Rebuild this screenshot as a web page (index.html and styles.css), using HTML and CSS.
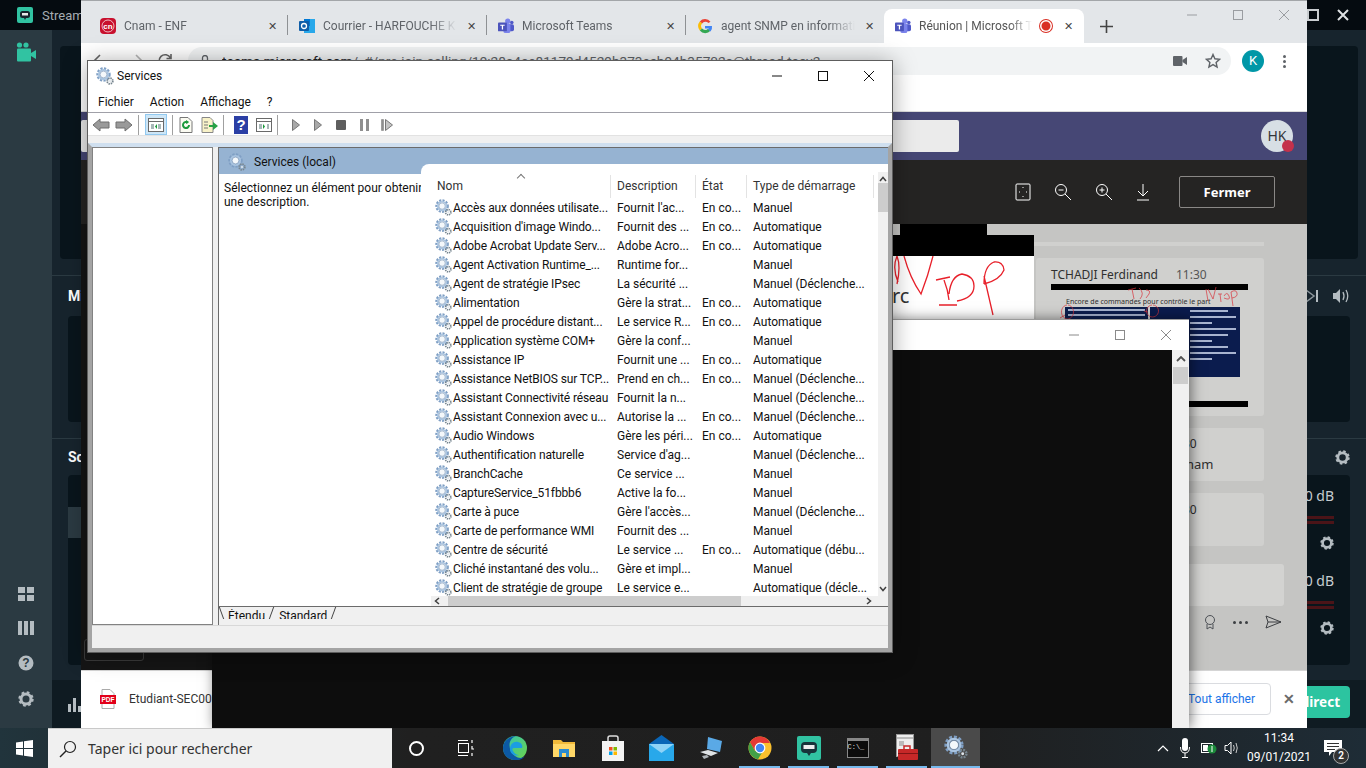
FILE: index.html
```html
<!DOCTYPE html>
<html lang="fr">
<head>
  <meta charset="UTF-8" />
  <title>Services</title>
  <link rel="stylesheet" href="styles.css">
</head>
<body>
<svg class="defs" width="0" height="0">
  <defs>
    <symbol id="gears" viewBox="0 0 18 18">
      <circle cx="7.5" cy="7.5" r="6" fill="none" stroke="#7f9fc4" stroke-width="2.4" stroke-dasharray="2.2 1.3"/>
      <circle cx="7.5" cy="7.5" r="4.6" fill="none" stroke="#a9c4e0" stroke-width="1.8"/>
      <circle cx="7.5" cy="7.5" r="3.4" fill="#f4f8fb" stroke="#6f8cae" stroke-width=".6"/>
      <circle cx="14" cy="14" r="2.8" fill="none" stroke="#76858f" stroke-width="1.8" stroke-dasharray="1.4 .8"/>
      <circle cx="14" cy="14" r="1.1" fill="#dfe6ec"/>
    </symbol>
    <symbol id="cog" viewBox="0 0 16 16">
      <circle cx="8" cy="8" r="5" fill="none" stroke="currentColor" stroke-width="3"/>
      <circle cx="8" cy="8" r="6.4" fill="none" stroke="currentColor" stroke-width="2.6" stroke-dasharray="2.6 2.42"/>
    </symbol>
    <symbol id="teams" viewBox="0 0 18 18">
      <circle cx="11" cy="3.5" r="3" fill="#7b83eb"/>
      <circle cx="15.5" cy="5" r="2" fill="#5059c9"/>
      <rect x="9" y="7" width="9" height="8" rx="2" fill="#5059c9"/>
      <rect x="6" y="6" width="8" height="11" rx="2.5" fill="#7b83eb"/>
      <rect x="0" y="5" width="10" height="10" rx="1" fill="#4b53bc"/>
      <path d="M2.5 7.5h5v1.2H5.7v4.3H4.300v-4.300H2.500z" fill="#fff"/>
    </symbol>
  </defs>
</svg>

<div class="desktop">
  <!-- fenetre du fond -->
  <section class="streamlabs">
    <div class="sl-title">
      <svg class="sl-logo" width="16" height="16" viewBox="0 0 16 16"><rect width="16" height="16" rx="2" fill="#31c3a2"/><rect x="3" y="4" width="10" height="7" rx="2.500" fill="#17242d"/><rect x="5" y="6" width="6" height="2.500" fill="#e8e8e8"/><path d="M7 11h2l-1 2z" fill="#17242d"/></svg>
      <span class="sl-name">Streamlabs OBS</span>
      <span class="sl-ctrl">
        <svg width="14" height="14" viewBox="0 0 14 14"><rect x="2" y="2" width="10" height="10" fill="none" stroke="#c9cdd0" stroke-width="2"/></svg>
        <svg width="14" height="14" viewBox="0 0 14 14"><path d="M2 2l10 10M12 2L2 12" stroke="#dfe2e4" stroke-width="2"/></svg>
      </span>
    </div>
    <div class="sl-body">
      <nav class="sl-side">
        <svg class="sl-cam" width="22" height="20" viewBox="0 0 22 20"><circle cx="4.500" cy="3" r="2.600" fill="#31c3a2"/><circle cx="11" cy="3" r="2.600" fill="#31c3a2"/><rect x="2" y="6.500" width="14" height="13" rx="1" fill="#31c3a2"/><path d="M16 11l5-3v9l-5-3z" fill="#31c3a2"/></svg>
        <div class="sl-side-low">
          <svg width="16" height="14" viewBox="0 0 16 14"><path d="M0 0h7v6H0zM9 0h7v6H9zM0 8h7v6H0zM9 8h7v6H9z" fill="#b4bcc1"/></svg>
          <svg width="16" height="14" viewBox="0 0 16 14"><path d="M0 0h4v14H0zM6 0h4v14H6zM12 0h4v14h-4z" fill="#b4bcc1"/></svg>
          <svg width="16" height="16" viewBox="0 0 16 16"><circle cx="8" cy="8" r="7.500" fill="#b4bcc1"/><text x="8" y="12" class="sl-q">?</text></svg>
          <svg class="sl-cog" width="16" height="16"><use href="#cog"/></svg>
        </div>
      </nav>
      <div class="sl-main">
        <div class="sl-sec sl-sec-a"><div class="sl-panel sl-panel-a"></div></div>
        <div class="sl-sec sl-sec-b">
          <div class="sl-head"><b>Mixeur</b>
            <span class="sl-media">
              <svg width="14" height="14" viewBox="0 0 14 14"><path d="M1 1l8 6-8 6z" fill="none" stroke="#8d979d" stroke-width="1.500"/><path d="M12 1v12" stroke="#b4bcc1" stroke-width="2"/></svg>
              <svg width="18" height="14" viewBox="0 0 18 14"><path d="M0 4h3l4-4v14l-4-4H0z" fill="#b4bcc1"/><path d="M10 3q2 4 0 8M13 1q3.500 6 0 12" fill="none" stroke="#b4bcc1" stroke-width="1.300"/></svg>
            </span>
          </div>
          <div class="sl-panel sl-panel-b"></div>
        </div>
        <div class="sl-sec sl-sec-c">
          <div class="sl-head sl-head-c"><b>Sources</b><svg class="sl-cog sl-cog-head" width="15" height="15"><use href="#cog"/></svg></div>
          <div class="sl-panel sl-panel-c">
            <div class="sl-audio">
              <span class="sl-db">0 dB</span><i class="sl-level"></i>
              <svg class="sl-cog" width="14" height="14"><use href="#cog"/></svg>
            </div>
            <div class="sl-audio">
              <span class="sl-db">0 dB</span><i class="sl-level"></i>
              <svg class="sl-cog" width="14" height="14"><use href="#cog"/></svg>
            </div>
          </div>
        </div>
        <div class="sl-foot">
          <svg class="sl-bars" width="14" height="16" viewBox="0 0 14 16"><path d="M0 8h3v8H0zM5 2h3v14H5zM10 10h3v6h-3z" fill="#b4bcc1"/></svg>
          <button class="sl-live">direct</button>
        </div>
      </div>
    </div>
  </section>

  <!-- chrome -->
  <section class="chrome">
    <div class="tabstrip">
      <div class="tab">
        <svg width="16" height="16" viewBox="0 0 16 16"><rect width="16" height="16" rx="4" fill="#c8102e"/><circle cx="8" cy="8" r="6" fill="none" stroke="#fff" stroke-width=".7"/><text x="8" y="11" class="fav-cn">cn</text></svg>
        <span class="tab-text">Cnam - ENF</span><span class="tab-x">✕</span>
      </div>
      <div class="tab">
        <svg width="16" height="16" viewBox="0 0 16 16"><rect x="5" y="1" width="11" height="14" fill="#28a8ea"/><rect x="5" y="1" width="6" height="7" fill="#0078d4"/><rect y="3" width="10" height="10" rx="1" fill="#0f5ea8"/><circle cx="5" cy="8" r="2.500" fill="none" stroke="#fff" stroke-width="1.300"/></svg>
        <span class="tab-text">Courrier - HARFOUCHE K</span><span class="tab-x">✕</span>
      </div>
      <div class="tab">
        <svg width="16" height="16"><use href="#teams"/></svg>
        <span class="tab-text">Microsoft Teams</span><span class="tab-x">✕</span>
      </div>
      <div class="tab">
        <svg width="16" height="16" viewBox="0 0 16 16"><path d="M13.500 3.700A7 7 0 0 0 2.800 3.400l2.300 2A4 4 0 0 1 11.400 5z" fill="#ea4335"/><path d="M2.800 3.400a7 7 0 0 0 0 9.200l2.300-2a4 4 0 0 1 0-5.200z" fill="#fbbc05"/><path d="M2.800 12.600a7 7 0 0 0 10.700.100l-2.400-1.900a4 4 0 0 1-6-.200z" fill="#34a853"/><path d="M15 8H8v2.600h3.900a4 4 0 0 1-.8 1l2.400 1.900A7 7 0 0 0 15 8z" fill="#4285f4"/></svg>
        <span class="tab-text">agent SNMP en informati</span><span class="tab-x">✕</span>
      </div>
      <div class="tab tab-on">
        <svg width="16" height="16"><use href="#teams"/></svg>
        <span class="tab-text tab-text-on">Réunion | Microsoft T</span>
        <span class="tab-rec"></span><span class="tab-x">✕</span>
      </div>
      <span class="tab-plus"><svg width="13" height="13" viewBox="0 0 13 13"><path d="M6.500 0v13M0 6.500h13" stroke="#444" stroke-width="1.600"/></svg></span>
      <span class="chrome-ctrl">
        <svg width="14" height="14" viewBox="0 0 14 14"><path d="M2 7h10" stroke="#9a9da1"/></svg>
        <svg width="14" height="14" viewBox="0 0 14 14"><rect x="2.500" y="2.500" width="9" height="9" fill="none" stroke="#9a9da1"/></svg>
        <svg width="14" height="14" viewBox="0 0 14 14"><path d="M2 2l10 10M12 2L2 12" stroke="#9a9da1"/></svg>
      </span>
    </div>
    <div class="toolbar">
      <span class="nav-btns">
        <svg width="16" height="16" viewBox="0 0 16 16"><path d="M15 8H2M8 2L2 8l6 6" fill="none" stroke="#666" stroke-width="1.600"/></svg>
        <svg width="16" height="16" viewBox="0 0 16 16"><path d="M1 8h13M8 2l6 6-6 6" fill="none" stroke="#b5b5b5" stroke-width="1.600"/></svg>
        <svg width="16" height="16" viewBox="0 0 16 16"><path d="M13.500 5A6 6 0 1 0 14 9M14 1v4.500H9.500" fill="none" stroke="#666" stroke-width="1.600"/></svg>
      </span>
      <div class="omnibox">
        <svg class="omni-lock" width="10" height="12" viewBox="0 0 10 12"><rect y="5" width="10" height="7" rx="1" fill="#5f6368"/><path d="M2.500 5V3a2.500 2.500 0 0 1 5 0v2" fill="none" stroke="#5f6368" stroke-width="1.300"/></svg>
        <span class="url"><b>teams.microsoft.com</b>/_#/pre-join-calling/19:28a4ae81179d4529b373ecb94b35702c@thread.tacv2</span>
        <svg class="omni-cam" width="14" height="12" viewBox="0 0 14 12"><rect y="1" width="9.500" height="10" rx="1" fill="#5f6368"/><path d="M9.500 5l4.500-3v8L9.500 7z" fill="#5f6368"/></svg>
        <svg width="16" height="16" viewBox="0 0 16 16"><path d="M8 1.500l1.900 4.300 4.600.500-3.400 3.100 1 4.600L8 11.600l-4.100 2.400 1-4.600L1.500 6.300l4.600-.5z" fill="none" stroke="#5f6368" stroke-width="1.400"/></svg>
      </div>
      <span class="avatar-k">K</span>
      <span class="kebab"><i></i><i></i><i></i></span>
    </div>
    <div class="teams-head">
      <div class="teams-search"></div>
      <div class="hk">HK<i></i></div>
    </div>
    <div class="viewer-bar">
      <svg width="16" height="18" viewBox="0 0 16 18"><rect x="1" y="1" width="14" height="16" rx="1" fill="none" stroke="#fff"/><path d="M8 4v1M8 13v1M4 9h1M11 9h1" stroke="#fff"/></svg>
      <svg width="18" height="18" viewBox="0 0 18 18"><circle cx="7" cy="7" r="5.500" fill="none" stroke="#fff"/><path d="M4.500 7h5M11 11l6 6" stroke="#fff"/></svg>
      <svg width="18" height="18" viewBox="0 0 18 18"><circle cx="7" cy="7" r="5.500" fill="none" stroke="#fff"/><path d="M4.500 7h5M7 4.500v5M11 11l6 6" stroke="#fff"/></svg>
      <svg width="14" height="18" viewBox="0 0 14 18"><path d="M7 1v12M2 8l5 5 5-5M1 17h12" fill="none" stroke="#fff"/></svg>
      <button class="close-btn">Fermer</button>
    </div>
    <div class="viewer">
      <div class="viewer-left"><div class="viewer-box"></div></div>
      <div class="viewer-main">
        <div class="slide-col">
          <div class="bar-top"></div>
          <div class="bar-wide"></div>
          <div class="slide-pic">
            <span class="slide-rc">rc</span>
            <svg class="slide-ink" width="142" height="64" viewBox="0 0 142 64"><path d="M6 26Q0 12 5 0q4 10 0 28M12 0q6 22 17 38Q36 20 41 0M44 24l14-3M52 24q4 10 5 20M47 49l18 0M57 38q2-18 13-20 12 2 12 12 0 12-17 15M92 20l9 39M92 28q0-18 10-22 9-1 10 8-4 10-20 14" fill="none" stroke="#e8202a" stroke-width="1.300"/></svg>
          </div>
        </div>
        <div class="chat">
          <div class="chat-strip"></div>
          <div class="msg msg-big">
            <div class="msg-who"><b>TCHADJI Ferdinand</b><span>11:30</span></div>
            <div class="msg-redact"></div>
            <p class="slide-title">Encore de commandes pour contrôle le part</p>
            <div class="navy">
              <div class="navy-l"><i></i><i></i></div>
              <div class="navy-r"><i></i><i></i><i></i><i></i><i></i><i></i><i></i><i></i><i></i></div>
            </div>
            <svg class="msg-ink" width="228" height="70" viewBox="0 0 228 70"><path d="M92 32l8-2M96 31l2 10M103 30q6 5 1 11M110 32q5 0 3 4l-3 4M170 31l2 12M172 31l5 10 3-12M182 36h4M184 36l1 8M188 38q3-5 5 0t-5 2M195 34l2 14M195 34q5-3 6 1t-5 5M31 47a6 7 0 1 0 1 0M116 47a6 6 0 1 0 1 0M24 60l5-3M108 53l4 1" fill="none" stroke="#d8333c" stroke-width=".7"/></svg>
            <div class="msg-redact msg-redact-low"></div>
          </div>
          <div class="msg msg-small"><span>11:30</span><span class="msg-line">de Cnam</span></div>
          <div class="msg msg-small2"><span>11:30</span></div>
          <div class="chat-input"></div>
          <div class="chat-tools">
            <svg width="12" height="15" viewBox="0 0 12 15"><circle cx="6" cy="5" r="4.500" fill="none" stroke="#4d5156"/><path d="M3 9v5l3-2 3 2V9" fill="none" stroke="#4d5156"/></svg>
            <span class="dots"><i></i><i></i><i></i></span>
            <svg width="17" height="14" viewBox="0 0 17 14"><path d="M1 1l15 6-15 6 2-6zM3 7h13" fill="none" stroke="#3c3f42"/></svg>
          </div>
        </div>
      </div>
    </div>
    <div class="shelf">
      <svg width="16" height="20" viewBox="0 0 16 20"><path d="M2 .500h8l4 4V19.500H2z" fill="#fff" stroke="#aaa"/><rect y="6" width="16" height="9" fill="#e2001a"/><text x="8" y="13" class="pdf-txt">PDF</text></svg>
      <span class="shelf-file">Etudiant-SEC001.pdf</span>
      <button class="shelf-all">Tout afficher</button>
      <span class="shelf-x">✕</span>
    </div>
  </section>

  <!-- fenetre noire -->
  <section class="blackwin">
    <div class="bw-title">
      <svg width="14" height="14" viewBox="0 0 14 14"><path d="M2 7h10" stroke="#8a8a8a"/></svg>
      <svg width="14" height="14" viewBox="0 0 14 14"><rect x="2.500" y="2.500" width="9" height="9" fill="none" stroke="#8a8a8a"/></svg>
      <svg width="14" height="14" viewBox="0 0 14 14"><path d="M2 2l10 10M12 2L2 12" stroke="#8a8a8a"/></svg>
    </div>
    <div class="bw-body">
      <div class="bw-content"></div>
      <div class="bw-scroll"><svg width="10" height="6" viewBox="0 0 10 6"><path d="M1 5l4-4 4 4" fill="none" stroke="#505050" stroke-width="1.800"/></svg><i></i></div>
    </div>
  </section>

  <!-- services.msc -->
  <section class="services">
    <div class="svc-title">
      <svg width="18" height="18"><use href="#gears"/></svg>
      <span class="svc-name">Services</span>
      <span class="svc-ctrl">
        <svg width="12" height="12" viewBox="0 0 12 12"><path d="M1 6h10" stroke="#111"/></svg>
        <svg width="12" height="12" viewBox="0 0 12 12"><rect x="1.500" y="1.500" width="9" height="9" fill="none" stroke="#111"/></svg>
        <svg width="12" height="12" viewBox="0 0 12 12"><path d="M1 1l10 10M11 1L1 11" stroke="#111"/></svg>
      </span>
    </div>
    <div class="svc-menu"><span>Fichier</span><span>Action</span><span>Affichage</span><span>?</span></div>
    <div class="svc-tools">
      <svg width="18" height="16" viewBox="0 0 18 16"><path d="M1 8l7-6v3h9v6H8v3z" fill="#9a9a9a" stroke="#6f6f6f"/></svg>
      <svg class="t-fwd" width="18" height="16" viewBox="0 0 18 16"><path d="M17 8l-7-6v3H1v6h9v3z" fill="#9a9a9a" stroke="#6f6f6f"/></svg>
      <i class="t-sep"></i>
      <span class="t-on"><svg width="16" height="14" viewBox="0 0 16 14"><rect x=".500" y=".500" width="15" height="13" fill="#fff" stroke="#6a6a6a"/><path d="M.500 3.500h15" stroke="#6a6a6a"/><path d="M3 6h3v5H3zM10 6h3v5h-3z" fill="#a8b8b8"/><path d="M9 6v5L7 8.500z" fill="#1c9a3c"/></svg></span>
      <i class="t-sep"></i>
      <svg class="t-ic" width="14" height="16" viewBox="0 0 14 16"><path d="M1 .500h8l4 4v11H1z" fill="#fbfbf2" stroke="#777"/><path d="M10 8a3 3 0 1 1-1-2.200" fill="none" stroke="#1c9a3c" stroke-width="2"/><path d="M7 3l3 2-3 2z" fill="#1c9a3c"/></svg>
      <svg class="t-ic" width="17" height="16" viewBox="0 0 17 16"><path d="M1 .500h8l3 3v12H1z" fill="#f8f2c8" stroke="#888"/><path d="M3 5h4M3 8h4M3 11h4" stroke="#777"/><path d="M8 8h4V5l5 4-5 4v-3H8z" fill="#27a245"/></svg>
      <i class="t-sep"></i>
      <svg class="t-ic t-help" width="14" height="18" viewBox="0 0 14 18"><rect width="14" height="18" fill="#2b3fa5"/><text x="7" y="14" class="t-q">?</text></svg>
      <svg class="t-ic" width="16" height="14" viewBox="0 0 16 14"><rect x=".500" y=".500" width="15" height="13" fill="#fff" stroke="#6a6a6a"/><path d="M.500 3.500h15" stroke="#6a6a6a"/><path d="M3 6h3v5H3zM11 6h2v5h-2z" fill="#a8b8b8"/><path d="M7 6v5l2-2.500z" fill="#1c9a3c"/></svg>
      <i class="t-sep"></i>
      <svg class="t-play" width="8" height="12" viewBox="0 0 8 12"><path d="M.500 .500l7 5.500-7 5.500z" fill="#a8a8a8" stroke="#777"/></svg>
      <svg class="t-play" width="8" height="12" viewBox="0 0 8 12"><path d="M.500 .500l7 5.500-7 5.500z" fill="#a8a8a8" stroke="#777"/></svg>
      <svg class="t-play" width="10" height="12" viewBox="0 0 10 12"><rect y="1" width="10" height="10" rx="1" fill="#5e5e5e"/></svg>
      <svg class="t-play" width="9" height="12" viewBox="0 0 9 12"><path d="M0 0h3v12H0zM6 0h3v12H6z" fill="#8f8f8f"/></svg>
      <svg class="t-play" width="12" height="12" viewBox="0 0 12 12"><path d="M.500 .500h2v11h-2z" fill="#8f8f8f" stroke="#777" stroke-width=".5"/><path d="M4.500 .500l7 5.500-7 5.500z" fill="#c4c4c4" stroke="#777"/></svg>
    </div>
    <div class="svc-gap"></div>
    <div class="svc-client">
      <div class="svc-panes">
        <div class="svc-tree"></div>
        <div class="svc-right">
          <div class="svc-band">
            <svg width="18" height="18"><use href="#gears"/></svg><span>Services (local)</span>
          </div>
          <div class="svc-split">
            <p class="svc-desc">Sélectionnez un élément pour obtenir<br>une description.</p>
            <div class="svc-list">
              <div class="list-scroll">
                <div class="list-main">
                  <div class="row row-head">
                    <span class="caret"></span>
                    <span class="cell">Nom</span><span class="cell">Description</span><span class="cell">État</span><span class="cell">Type de démarrage</span>
                  </div>
                  <div class="row"><span class="cell c-name"><svg width="17" height="17"><use href="#gears"/></svg>Accès aux données utilisate...</span><span class="cell">Fournit l'ac...</span><span class="cell">En co...</span><span class="cell">Manuel</span></div>
                  <div class="row"><span class="cell c-name"><svg width="17" height="17"><use href="#gears"/></svg>Acquisition d'image Windo...</span><span class="cell">Fournit des ...</span><span class="cell">En co...</span><span class="cell">Automatique</span></div>
                  <div class="row"><span class="cell c-name"><svg width="17" height="17"><use href="#gears"/></svg>Adobe Acrobat Update Serv...</span><span class="cell">Adobe Acro...</span><span class="cell">En co...</span><span class="cell">Automatique</span></div>
                  <div class="row"><span class="cell c-name"><svg width="17" height="17"><use href="#gears"/></svg>Agent Activation Runtime_...</span><span class="cell">Runtime for...</span><span class="cell"></span><span class="cell">Manuel</span></div>
                  <div class="row"><span class="cell c-name"><svg width="17" height="17"><use href="#gears"/></svg>Agent de stratégie IPsec</span><span class="cell">La sécurité ...</span><span class="cell"></span><span class="cell">Manuel (Déclenche...</span></div>
                  <div class="row"><span class="cell c-name"><svg width="17" height="17"><use href="#gears"/></svg>Alimentation</span><span class="cell">Gère la strat...</span><span class="cell">En co...</span><span class="cell">Automatique</span></div>
                  <div class="row"><span class="cell c-name"><svg width="17" height="17"><use href="#gears"/></svg>Appel de procédure distant...</span><span class="cell">Le service R...</span><span class="cell">En co...</span><span class="cell">Automatique</span></div>
                  <div class="row"><span class="cell c-name"><svg width="17" height="17"><use href="#gears"/></svg>Application système COM+</span><span class="cell">Gère la conf...</span><span class="cell"></span><span class="cell">Manuel</span></div>
                  <div class="row"><span class="cell c-name"><svg width="17" height="17"><use href="#gears"/></svg>Assistance IP</span><span class="cell">Fournit une ...</span><span class="cell">En co...</span><span class="cell">Automatique</span></div>
                  <div class="row"><span class="cell c-name"><svg width="17" height="17"><use href="#gears"/></svg>Assistance NetBIOS sur TCP...</span><span class="cell">Prend en ch...</span><span class="cell">En co...</span><span class="cell">Manuel (Déclenche...</span></div>
                  <div class="row"><span class="cell c-name"><svg width="17" height="17"><use href="#gears"/></svg>Assistant Connectivité réseau</span><span class="cell">Fournit la n...</span><span class="cell"></span><span class="cell">Manuel (Déclenche...</span></div>
                  <div class="row"><span class="cell c-name"><svg width="17" height="17"><use href="#gears"/></svg>Assistant Connexion avec u...</span><span class="cell">Autorise la ...</span><span class="cell">En co...</span><span class="cell">Manuel (Déclenche...</span></div>
                  <div class="row"><span class="cell c-name"><svg width="17" height="17"><use href="#gears"/></svg>Audio Windows</span><span class="cell">Gère les péri...</span><span class="cell">En co...</span><span class="cell">Automatique</span></div>
                  <div class="row"><span class="cell c-name"><svg width="17" height="17"><use href="#gears"/></svg>Authentification naturelle</span><span class="cell">Service d'ag...</span><span class="cell"></span><span class="cell">Manuel (Déclenche...</span></div>
                  <div class="row"><span class="cell c-name"><svg width="17" height="17"><use href="#gears"/></svg>BranchCache</span><span class="cell">Ce service ...</span><span class="cell"></span><span class="cell">Manuel</span></div>
                  <div class="row"><span class="cell c-name"><svg width="17" height="17"><use href="#gears"/></svg>CaptureService_51fbbb6</span><span class="cell">Active la fo...</span><span class="cell"></span><span class="cell">Manuel</span></div>
                  <div class="row"><span class="cell c-name"><svg width="17" height="17"><use href="#gears"/></svg>Carte à puce</span><span class="cell">Gère l'accès...</span><span class="cell"></span><span class="cell">Manuel (Déclenche...</span></div>
                  <div class="row"><span class="cell c-name"><svg width="17" height="17"><use href="#gears"/></svg>Carte de performance WMI</span><span class="cell">Fournit des ...</span><span class="cell"></span><span class="cell">Manuel</span></div>
                  <div class="row"><span class="cell c-name"><svg width="17" height="17"><use href="#gears"/></svg>Centre de sécurité</span><span class="cell">Le service ...</span><span class="cell">En co...</span><span class="cell">Automatique (débu...</span></div>
                  <div class="row"><span class="cell c-name"><svg width="17" height="17"><use href="#gears"/></svg>Cliché instantané des volu...</span><span class="cell">Gère et impl...</span><span class="cell"></span><span class="cell">Manuel</span></div>
                  <div class="row"><span class="cell c-name"><svg width="17" height="17"><use href="#gears"/></svg>Client de stratégie de groupe</span><span class="cell">Le service e...</span><span class="cell"></span><span class="cell">Automatique (décle...</span></div>
                </div>
                <div class="vscroll">
                  <svg width="8" height="6" viewBox="0 0 8 6"><path d="M1 5l3-3.500L7 5" fill="none" stroke="#404040" stroke-width="1.500"/></svg>
                  <i></i>
                  <svg width="8" height="6" viewBox="0 0 8 6"><path d="M1 1l3 3.500L7 1" fill="none" stroke="#404040" stroke-width="1.500"/></svg>
                </div>
              </div>
              <div class="hscroll">
                <svg width="6" height="8" viewBox="0 0 6 8"><path d="M5 1L1.500 4 5 7" fill="none" stroke="#404040" stroke-width="1.500"/></svg>
                <i></i>
                <svg width="6" height="8" viewBox="0 0 6 8"><path d="M1 1l3.500 3L1 7" fill="none" stroke="#404040" stroke-width="1.500"/></svg>
              </div>
            </div>
          </div>
          <div class="svc-tabs"><span class="vtab"><em>Étendu</em></span><span class="vtab"><em>Standard</em></span></div>
        </div>
      </div>
      <div class="svc-status"></div>
    </div>
  </section>

  <footer class="taskbar">
    <span class="start"><svg width="17" height="17" viewBox="0 0 17 17"><path d="M0 2.400l7-1v6.700H0zM8 1.200l9-1.200v8.100H8zM0 9h7v6.600l-7-1zM8 9h9v8l-9-1.200z" fill="#fff"/></svg></span>
    <div class="searchbox">
      <svg width="18" height="18" viewBox="0 0 18 18"><circle cx="11" cy="7" r="5.500" fill="none" stroke="#222" stroke-width="1.200"/><path d="M7 11l-6 6" stroke="#222" stroke-width="1.400"/></svg>
      <span>Taper ici pour rechercher</span>
    </div>
    <div class="task-icons">
      <span class="ti"><i class="cortana"></i></span>
      <span class="ti"><svg width="18" height="18" viewBox="0 0 18 18"><rect x="1.500" y="4.500" width="10" height="9" fill="none" stroke="#fff"/><path d="M1 1.500h10M1 16.500h10M15 1v3M15 7v3h2M15 14v3" stroke="#fff" stroke-width="1.200" fill="none"/></svg></span>
      <span class="ti"><svg width="26" height="26" viewBox="0 0 26 26"><defs><linearGradient id="edgeA" x1="0" y1="0" x2="1" y2="1"><stop offset="0" stop-color="#35c1b0"/><stop offset="1" stop-color="#6bd64c"/></linearGradient></defs><circle cx="13" cy="13" r="12" fill="url(#edgeA)"/><path d="M1 13C1 5 9 1 14 1 5 4 6 16 13 21c4 3 8 2 10 0-3 4-6 4-10 4C6 25 1 20 1 13z" fill="#0c59a4"/><path d="M8 14c0-5 4-8 8-7 4 1 5 4 4 6h-8c-2 0-2 2-1 3 1 2 3 4 6 4-5 2-9-2-9-6z" fill="#1b9de2"/></svg></span>
      <span class="ti"><svg width="22" height="20" viewBox="0 0 22 20"><path d="M0 2h8l2 2h12v15H0z" fill="#f0b93a"/><rect y="6" width="22" height="13" fill="#ffd767"/><rect x="6" y="11" width="10" height="8" fill="#2a8bd0"/><rect x="9" y="15" width="4" height="4" fill="#ffd767"/></svg></span>
      <span class="ti"><svg width="22" height="26" viewBox="0 0 22 26"><path d="M6 8V3q0-2 2-2h6q2 0 2 2v5" fill="none" stroke="#ddd" stroke-width="1.500"/><rect y="6" width="22" height="20" fill="#f4f4f4"/><path d="M7 12h3.500v3.500H7z" fill="#f25022"/><path d="M11.500 12H15v3.500h-3.500z" fill="#7fba00"/><path d="M7 16.500h3.500V20H7z" fill="#00a4ef"/><path d="M11.500 16.500H15V20h-3.500z" fill="#ffb900"/></svg></span>
      <span class="ti"><svg width="25" height="26" viewBox="0 0 25 26"><path d="M12.500 0L25 9v17H0V9z" fill="#0a66b7"/><rect y="9" width="25" height="17" fill="#28a8ea"/><path d="M0 9l12.500 9L25 9" fill="#8fd3f7"/></svg></span>
      <span class="ti"><svg width="24" height="22" viewBox="0 0 24 22"><path d="M9 0l14 4-2 11-13-3z" fill="#5aa9e6"/><path d="M1 15l8-2 10 3-7 3z" fill="#dfe3e6"/><path d="M3 19l5-1 2 2-5 2z" fill="#aeb4b9"/></svg></span>
      <span class="ti ti-run"><svg width="24" height="24" viewBox="0 0 24 24"><circle cx="12" cy="12" r="11.500" fill="#fbc02d"/><path d="M12 .500A11.500 11.500 0 0 0 2 6.300L7 15 12 7h10A11.500 11.500 0 0 0 12 .500z" fill="#e53935"/><path d="M2 6.300A11.500 11.500 0 0 0 10 23.300L15 15H7z" fill="#43a047"/><circle cx="12" cy="12" r="5.400" fill="#fff"/><circle cx="12" cy="12" r="4.200" fill="#4285f4"/></svg></span>
      <span class="ti ti-run"><svg width="24" height="24" viewBox="0 0 24 24"><rect width="24" height="24" rx="2" fill="#31c3a2"/><rect x="4" y="6" width="16" height="11" rx="4" fill="#17343a"/><rect x="6.500" y="9" width="11" height="4" fill="#eee"/><path d="M10 17h4l-2 3z" fill="#17343a"/></svg></span>
      <span class="ti ti-run"><span class="cmd">C:\_</span></span>
      <span class="ti ti-run"><svg width="22" height="28" viewBox="0 0 22 28"><rect x=".500" y=".500" width="17" height="22" fill="#eee" stroke="#999"/><path d="M1 4h16" stroke="#888"/><rect x="3" y="7" width="5" height="5" fill="#bbb"/><rect x="2" y="15" width="20" height="11" rx="1" fill="#c62828"/><path d="M8 15v-3h6v3" fill="none" stroke="#c62828" stroke-width="1.500"/><rect x="2" y="19" width="20" height="1" fill="#7f1515"/></svg></span>
      <span class="ti ti-on"><svg width="24" height="24"><use href="#gears"/></svg></span>
    </div>
    <div class="tray">
      <svg width="12" height="8" viewBox="0 0 12 8"><path d="M1 7l5-5 5 5" fill="none" stroke="#fff" stroke-width="1.200"/></svg>
      <svg width="10" height="20" viewBox="0 0 10 20"><rect x="2" y="0" width="6" height="13" rx="3" fill="#fff"/><path d="M.500 9q0 6 4.500 6t4.500-6M5 15v4M2 19.500h6" fill="none" stroke="#fff"/></svg>
      <svg width="16" height="14" viewBox="0 0 16 14"><rect x=".500" y="2.500" width="11" height="9" fill="none" stroke="#fff"/><rect x="2" y="4" width="5" height="6" fill="#fff"/><circle cx="11" cy="8" r="4.500" fill="#1b8a3a"/><path d="M11 5v6" stroke="#fff"/></svg>
      <svg class="tray-vol" width="16" height="16" viewBox="0 0 16 16"><path d="M1 5.500h2.500L7 2v12l-3.500-3.500H1z" fill="none" stroke="#fff"/><path d="M9.500 5q1.500 3 0 6M12 3q2.500 5 0 10" fill="none" stroke="#ccc"/></svg>
    </div>
    <div class="clock"><span>11:34</span><span>09/01/2021</span></div>
    <div class="notif">
      <svg width="18" height="16" viewBox="0 0 18 16"><path d="M0 0h18v12H8l-3 4v-4H0z" fill="#fff"/><path d="M3 3.500h12M3 6.500h12M3 9.500h8" stroke="#333"/></svg>
      <b>2</b>
    </div>
  </footer>
</div>
</body>
</html>
```

FILE: styles.css
```css
* {
  box-sizing: border-box;
  margin: 0;
  padding: 0;
}
body {
  font-family: Roboto, "Noto Sans", sans-serif;
  background: #000;
  overflow: hidden;
}
svg {
  flex: none;
  display: block;
}
i {
  display: block;
}
.defs {
  position: absolute;
}
.desktop {
  width: 1366px;
  height: 768px;
  display: flex;
  flex-direction: column;
  position: relative;
  overflow: hidden;
}

/* streamlabs */
.streamlabs {
  position: absolute;
  left: 0;
  top: 0;
  width: 1366px;
  height: 728px;
  background: #17242d;
  display: flex;
  flex-direction: column;
  color: #fff;
}
.sl-title {
  height: 30px;
  background: #050b10;
  display: flex;
  align-items: center;
  padding-left: 17px;
  gap: 9px;
  font-size: 13px;
  color: #a5adb2;
}
.sl-ctrl {
  margin-left: auto;
  display: flex;
  gap: 16px;
  padding-right: 16px;
}
.sl-body {
  flex: 1;
  display: flex;
  min-height: 0;
}
.sl-side {
  width: 52px;
  background: #2b3a42;
  display: flex;
  flex-direction: column;
  align-items: center;
  padding-top: 12px;
}
.sl-cam {
  margin-bottom: auto;
}
.sl-side-low {
  display: flex;
  flex-direction: column;
  align-items: center;
  gap: 20px;
  padding-bottom: 21px;
}
.sl-q {
  font: bold 12px "Liberation Sans", sans-serif;
  text-anchor: middle;
  fill: #2b3a42;
}
.sl-cog {
  color: #b4bcc1;
}
.sl-main {
  flex: 1;
  display: flex;
  flex-direction: column;
}
.sl-sec {
  border-bottom: 1px solid #2b3a42;
  padding: 0 16px 0 16px;
}
.sl-sec-a {
  height: 246px;
  padding: 16px 8px 0;
}
.sl-panel {
  background: #09151c;
  border-radius: 4px;
}
.sl-panel-a {
  height: 213px;
}
.sl-sec-b {
  height: 163px;
}
.sl-head {
  height: 40px;
  display: flex;
  align-items: center;
  font-size: 14px;
}
.sl-head-c {
  height: 36px;
}
.sl-media {
  margin-left: auto;
  display: flex;
  gap: 14px;
  align-items: center;
  margin-right: -1px;
}
.sl-panel-b {
  height: 106px;
}
.sl-sec-c {
  flex: 1;
  border-bottom: none;
}
.sl-cog-head {
  margin-left: auto;
  margin-right: 0;
}
.sl-panel-c {
  height: 190px;
  padding-top: 11px;
  background-image: linear-gradient(transparent 32px, #2b3a42 32px, #2b3a42 63px, transparent 63px);
  background-size: 50% 100%;
  background-repeat: no-repeat;
}
.sl-audio {
  height: 85px;
  display: flex;
  flex-direction: column;
  align-items: flex-end;
  padding: 0 16px 0 0;
}
.sl-db {
  font-family: "Noto Sans", sans-serif;
  font-size: 14px;
  line-height: 20px;
  color: #c5ccd0;
}
.sl-level {
  width: 300px;
  height: 8px;
  margin-top: 10px;
  border-top: 3px solid #4b1418;
  border-bottom: 3px solid #4b1418;
}
.sl-audio .sl-cog {
  margin: 12px 0 0;
}
.sl-foot {
  height: 48px;
  background: #0f1b22;
  display: flex;
  align-items: center;
  padding: 0 16px;
}
.sl-live {
  margin-left: auto;
  width: 160px;
  height: 32px;
  border: none;
  border-radius: 4px;
  background: #2cc4a0;
  color: #fff;
  font: bold 13.500px "Noto Sans", sans-serif;
  text-align: right;
  padding-right: 10px;
  margin-top: -4px;
}

/* chrome */
.chrome {
  position: absolute;
  left: 81px;
  top: 0;
  width: 1226px;
  height: 728px;
  display: flex;
  flex-direction: column;
  background: #fff;
  border-top: 1px solid #a3a6a9;
}
.tabstrip {
  height: 42px;
  background: #e3e6e9;
  display: flex;
  align-items: flex-end;
  padding-left: 11px;
  font-size: 12px;
  color: #555;
}
.tab {
  width: 199px;
  height: 34px;
  display: flex;
  align-items: center;
  padding: 0 13px 0 8px;
  gap: 8px;
  position: relative;
}
.tab::after {
  content: "";
  position: absolute;
  right: 3px;
  top: 6px;
  height: 20px;
  border-right: 1px solid #8e9194;
}
.tab:nth-child(4)::after {
  display: none;
}
.tab-text {
  flex: 1;
  white-space: nowrap;
  overflow: hidden;
  color: #5f6368;
  -webkit-mask-image: linear-gradient(to right, #000 80%, transparent);
  mask-image: linear-gradient(to right, #000 80%, transparent);
}
.tab-x {
  color: #444;
  font-size: 11px;
  width: 12px;
  text-align: center;
}
.tab-on {
  width: 200px;
  background: #fff;
  border-radius: 8px 8px 0 0;
  margin-left: -4px;
  padding-left: 11px;
  padding-right: 10px;
}
.tab-on::after {
  display: none;
}
.tab-text-on {
  color: #555;
}
.tab-rec {
  width: 12px;
  height: 12px;
  border-radius: 50%;
  background: #d93025;
  box-shadow: inset 0 0 0 1.5px #fff, 0 0 0 1px #d93025;
  flex: none;
  margin-right: 2px;
}
.tab-plus {
  width: 44px;
  height: 34px;
  display: flex;
  align-items: center;
  justify-content: center;
}
.chrome-ctrl {
  align-self: flex-start;
  margin-left: auto;
  display: flex;
  gap: 32px;
  padding: 7px 16px 0 0;
}
.toolbar {
  height: 69px;
  background: #fff;
  display: flex;
  align-items: flex-start;
  padding-top: 4px;
  border-bottom: 1px solid #dcdcdc;
}
.nav-btns {
  width: 107px;
  display: flex;
  padding: 6px 0 0 11px;
  gap: 20px;
}
.nav-btns svg:last-child {
  margin-left: -7px;
}
.omnibox {
  width: 1043px;
  height: 28px;
  background: #f1f3f4;
  border-radius: 14px;
  display: flex;
  align-items: center;
  gap: 18px;
  padding-right: 10px;
  font-size: 13.600px;
  color: #5f6368;
}
.omni-lock {
  margin-left: 12px;
  margin-right: -6px;
}
.url {
  flex: 1;
  white-space: nowrap;
  overflow: hidden;
}
.url b {
  font-weight: 400;
  color: #202124;
}
.avatar-k {
  width: 22px;
  height: 22px;
  margin: 3px 0 0 11px;
  border-radius: 50%;
  background: #0097a7;
  color: #fff;
  font-size: 13px;
  line-height: 22px;
  text-align: center;
}
.kebab {
  margin: 8px 0 0 19px;
  display: flex;
  flex-direction: column;
  gap: 2px;
}
.kebab i {
  width: 3px;
  height: 3px;
  border-radius: 50%;
  background: #5f6368;
}
.teams-head {
  height: 48px;
  background: #464775;
  display: flex;
  align-items: center;
  justify-content: space-between;
  padding-right: 14px;
}
.teams-search {
  width: 878px;
  height: 32px;
  background: #ebebeb;
  border-radius: 2px;
}
.hk {
  width: 32px;
  height: 32px;
  border-radius: 50%;
  background: #d7dfe5;
  color: #33363a;
  font-family: "Noto Sans", sans-serif;
  font-size: 14px;
  line-height: 32px;
  text-align: center;
  position: relative;
}
.hk i {
  position: absolute;
  right: -1px;
  bottom: 0;
  width: 12px;
  height: 12px;
  border-radius: 50%;
  background: #c4314b;
}
.viewer-bar {
  height: 64px;
  background: #252423;
  display: flex;
  align-items: center;
  justify-content: flex-end;
  gap: 23px;
  padding-right: 32px;
}
.close-btn {
  margin-left: 6px;
  width: 96px;
  height: 32px;
  background: none;
  border: 1px solid #8a8886;
  border-radius: 2px;
  color: #fff;
  font: bold 13px "Noto Sans", sans-serif;
}
.viewer {
  flex: 1;
  display: flex;
  background: #c5c5c3;
  min-height: 0;
}
.viewer-left {
  width: 131px;
  background: #151515;
  padding: 415px 0 0 3px;
}
.viewer-box {
  width: 60px;
  height: 22px;
  border: 1px solid #3a3a3a;
  border-radius: 3px;
}
.viewer-main {
  flex: 1;
  display: flex;
  justify-content: flex-end;
  padding-right: 43px;
  min-width: 0;
}
.slide-col {
  width: 142px;
  margin-right: 2px;
}
.bar-top {
  width: 87px;
  height: 11px;
  margin-left: 8px;
  background: #000;
}
.bar-wide {
  height: 21px;
  background: #000;
}
.slide-pic {
  height: 64px;
  background: #fff;
  position: relative;
  display: flex;
  align-items: flex-end;
  padding-bottom: 11px;
  font-family: "Noto Sans", sans-serif;
  font-size: 20px;
  line-height: 26px;
  color: #333;
}
.slide-ink {
  position: absolute;
  left: 0;
  top: 0;
}
.chat {
  width: 228px;
  display: flex;
  flex-direction: column;
  padding-top: 18px;
}
.chat-strip {
  height: 4px;
  background: #d0d0ce;
  margin-bottom: 12px;
  margin-left: -2px;
}
.msg {
  background: #d0d0ce;
  border-radius: 3px;
  font-family: "Noto Sans", sans-serif;
  font-size: 12px;
  color: #2f2f2f;
}
.msg-big {
  height: 158px;
  padding: 9px 16px 0 15px;
  margin-bottom: 12px;
  overflow: hidden;
  position: relative;
}
.msg-who {
  display: flex;
  gap: 18px;
  line-height: 16px;
}
.msg-who b {
  font-weight: 400;
}
.msg-who span {
  color: #555;
}
.msg-redact {
  height: 6px;
  background: #000;
  margin-top: 1px;
  width: 197px;
}
.msg-redact-low {
  margin-top: 24px;
}
.slide-title {
  font-size: 7px;
  line-height: 10px;
  margin: 7px 0 0 15px;
  white-space: nowrap;
}
.navy {
  width: 175px;
  height: 70px;
  margin-left: 14px;
  display: flex;
  gap: 2px;
}
.navy-l {
  width: 83px;
  height: 13px;
  background: #0d1f4f;
  padding: 2px 3px;
  display: flex;
  flex-direction: column;
  gap: 3px;
}
.navy-r {
  flex: 1;
  background: #0b1c4e;
  padding: 3px 4px 0 40px;
  display: flex;
  flex-direction: column;
  gap: 4px;
}
.navy i {
  height: 2px;
  background: #a8b4d0;
}
.navy-r i:nth-child(odd) {
  width: 38px;
}
.navy-r i:nth-child(3n) {
  width: 22px;
}
.msg-ink {
  position: absolute;
  left: 0;
  top: 0;
}
.msg-small {
  height: 53px;
  padding: 8px 0 0 130px;
  margin-bottom: 12px;
  display: flex;
  flex-direction: column;
  gap: 4px;
  line-height: 16px;
}
.msg-line {
  font-size: 13px;
  margin-left: -7px;
}
.msg-small2 {
  height: 53px;
  padding: 9px 0 0 130px;
  margin-bottom: 18px;
  line-height: 16px;
}
.chat-input {
  height: 42px;
  width: 248px;
  background: #d3d3d1;
  border-radius: 3px;
  flex: none;
}
.chat-tools {
  display: flex;
  align-items: center;
  justify-content: flex-end;
  gap: 17px;
  height: 32px;
  margin-right: -18px;
}
.dots {
  display: flex;
  gap: 3px;
}
.dots i {
  width: 3px;
  height: 3px;
  border-radius: 50%;
  background: #3c3f42;
}
.shelf {
  height: 58px;
  background: #fff;
  display: flex;
  align-items: center;
  padding: 0 0 2px 19px;
  font-size: 12px;
  color: #333;
  border-top: 1px solid #d5d5d5;
}
.pdf-txt {
  font: bold 6.500px "Liberation Sans", sans-serif;
  fill: #fff;
  text-anchor: middle;
}
.fav-cn {
  font: bold 8px "Liberation Sans", sans-serif;
  fill: #fff;
  text-anchor: middle;
}
.shelf-file {
  margin-left: 13px;
  white-space: nowrap;
}
.shelf-all {
  margin-left: auto;
  width: 110px;
  height: 32px;
  border: 1px solid #dadce0;
  border-radius: 4px;
  background: #fff;
  color: #1a73e8;
  font: 12px Roboto, sans-serif;
  text-align: right;
  padding-right: 15px;
}
.shelf-x {
  width: 36px;
  text-align: center;
  font-size: 14px;
  font-weight: 700;
  color: #6a6a6a;
}

/* fenetre noire */
.blackwin {
  position: absolute;
  left: 212px;
  top: 319px;
  width: 977px;
  height: 409px;
  display: flex;
  flex-direction: column;
  border-top: 1px solid #9a9a9a;
  box-shadow: 2px 0 12px rgba(0, 0, 0, 0.5);
  background: #fff;
}
.bw-title {
  height: 30px;
  display: flex;
  justify-content: flex-end;
  align-items: center;
  gap: 32px;
  padding-right: 16px;
}
.bw-body {
  flex: 1;
  display: flex;
}
.bw-content {
  flex: 1;
  background: #0d0d0d;
}
.bw-scroll {
  width: 17px;
  background: #f0f0f0;
  padding-top: 6px;
  display: flex;
  flex-direction: column;
  align-items: center;
}
.bw-scroll i {
  width: 15px;
  height: 17px;
  margin-top: 5px;
  background: #cdcdcd;
}

/* services */
.services {
  position: absolute;
  left: 87px;
  top: 60px;
  width: 806px;
  height: 593px;
  background: #fff;
  border: 1px solid #5d5d5d;
  display: flex;
  flex-direction: column;
  font-size: 12px;
  color: #111;
  box-shadow: 0 2px 22px rgba(0, 0, 0, 0.35);
}
.svc-title {
  height: 29px;
  display: flex;
  align-items: center;
  padding-left: 8px;
  gap: 3px;
}
.svc-ctrl {
  margin-left: auto;
  display: flex;
  gap: 34px;
  padding-right: 17px;
}
.svc-menu {
  height: 23px;
  display: flex;
  align-items: center;
  gap: 16px;
  padding: 1px 0 0 10px;
  border-bottom: 1px solid #a0a0a8;
}
.svc-tools {
  height: 23px;
  display: flex;
  align-items: center;
  padding: 1px 0 0 4px;
  border-bottom: 1px solid #e2e2e2;
}
.t-fwd {
  margin-left: 5px;
}
.t-sep {
  width: 1px;
  height: 20px;
  background: #a0a0a0;
  margin: 0 6px 0 5px;
}
.t-on {
  width: 22px;
  height: 21px;
  background: #cde6f7;
  border: 1px solid #92c9f0;
  display: flex;
  align-items: center;
  justify-content: center;
}
.t-ic + .t-ic {
  margin-left: 8px;
}
.t-help {
  margin-left: 4px;
}
.t-q {
  font: bold 15px "Liberation Sans", sans-serif;
  fill: #fff;
  text-anchor: middle;
}
.t-play {
  margin-left: 14px;
}
.t-sep + .t-play {
  margin-left: 8px;
}
.t-play:last-child {
  margin-left: 12px;
}
.svc-gap {
  height: 7px;
  background: #f0f0f0;
}
.svc-client {
  flex: 1;
  display: flex;
  flex-direction: column;
  border: 4px solid #a4a4a4;
  border-top: 4px solid #cfdfef;
  background: #f0f0f0;
  min-height: 0;
}
.svc-panes {
  height: 478px;
  display: flex;
  gap: 5px;
}
.svc-tree {
  width: 121px;
  background: #fff;
  border: 1px solid #828282;
}
.svc-right {
  flex: 1;
  display: flex;
  flex-direction: column;
  border-left: 1px solid #6b6b6b;
  border-top: 1px solid #6b6b6b;
  min-width: 0;
}
.svc-band {
  height: 26px;
  background: #96b3d2;
  display: flex;
  align-items: center;
  gap: 8px;
  padding: 1px 0 0 9px;
}
.svc-split {
  height: 432px;
  display: flex;
  background: #fff;
}
.svc-desc {
  width: 202px;
  padding: 7px 0 0 5px;
  line-height: 14px;
  white-space: nowrap;
}
.svc-list {
  width: 467px;
  margin-top: -10px;
  background: #fff;
  border-top-left-radius: 8px;
  position: relative;
  display: flex;
  flex-direction: column;
}
.list-scroll {
  flex: 1;
  display: flex;
  min-height: 0;
}
.list-main {
  flex: 1;
  padding-left: 10px;
  overflow: hidden;
  position: relative;
}
.row {
  display: grid;
  grid-template-columns: 180px 85px 51px 127px;
  height: 19px;
  align-items: center;
  white-space: nowrap;
}
.row-head {
  height: 34px;
  padding-top: 11px;
  color: #333;
  align-items: stretch;
}
.row-head .cell {
  line-height: 23px;
  border-right: 1px solid #e3e3e3;
}
.caret {
  position: absolute;
  left: 97px;
  top: 11px;
  width: 6px;
  height: 6px;
  border-left: 1px solid #777;
  border-top: 1px solid #777;
  transform: rotate(45deg);
}
.cell {
  padding-left: 6px;
  overflow: hidden;
}
.c-name {
  display: flex;
  align-items: center;
  gap: 1px;
  padding-left: 4px;
  letter-spacing: -0.12px;
}
.vscroll {
  width: 10px;
  background: #f0f0f0;
  margin-top: 8px;
  display: flex;
  flex-direction: column;
  align-items: center;
  padding: 4px 0;
}
.vscroll i {
  width: 10px;
  height: 29px;
  margin: 1px 0 auto;
  background: #cdcdcd;
}
.hscroll {
  height: 10px;
  margin-left: 10px;
  background: #f0f0f0;
  display: flex;
  align-items: center;
  padding: 0 16px 0 3px;
}
.hscroll i {
  width: 293px;
  height: 10px;
  margin: 0 auto 0 8px;
  background: #cdcdcd;
}
.svc-tabs {
  height: 19px;
  border-top: 1px solid #6b6b6b;
  display: flex;
  padding-left: 9px;
}
.vtab {
  height: 10px;
  margin: 2px 14px 0 0;
  position: relative;
}
.vtab em {
  display: block;
  height: 10px;
  overflow: hidden;
  font-style: normal;
  line-height: 14px;
}
.vtab::after {
  content: "";
  position: absolute;
  right: -7px;
  top: -2px;
  height: 12px;
  border-right: 1px solid #444;
  transform: skewX(-20deg);
}
.vtab:first-child::before {
  content: "";
  position: absolute;
  left: -7px;
  top: -2px;
  height: 12px;
  border-left: 1px solid #444;
  transform: skewX(20deg);
}
.svc-status {
  flex: 1;
  border-top: 1px solid #d8d8d8;
}

/* barre des taches */
.taskbar {
  position: absolute;
  left: 0;
  top: 728px;
  width: 1366px;
  height: 40px;
  display: flex;
  background: linear-gradient(to right, #21343c, #202020 30%, #1f1f1f 70%, #1e2c36);
  color: #fff;
}
.start {
  width: 48px;
  display: flex;
  align-items: center;
  justify-content: center;
}
.searchbox {
  width: 344px;
  background: #f0f0f0;
  display: flex;
  align-items: center;
  gap: 11px;
  padding-left: 11px;
  font-family: "Noto Sans", sans-serif;
  font-size: 14px;
  color: #333;
  border-top: 1px solid #c9c9c9;
}
.task-icons {
  display: flex;
}
.ti {
  width: 49px;
  height: 40px;
  display: flex;
  align-items: center;
  justify-content: center;
  position: relative;
}
.ti-run::after {
  content: "";
  position: absolute;
  left: 4px;
  right: 4px;
  bottom: 0;
  height: 2px;
  background: #76b9ed;
}
.cortana {
  width: 15px;
  height: 15px;
  border: 2px solid #fff;
  border-radius: 50%;
}
.cmd {
  width: 22px;
  height: 20px;
  background: #0c0c0c;
  border: 1px solid #888;
  border-top-width: 3px;
  font: 7px "Liberation Mono", monospace;
  color: #ddd;
  padding-top: 2px;
}
.ti-on {
  background: #4a4a4a;
  border-bottom: 2px solid #76b9ed;
}
.tray {
  margin-left: auto;
  display: flex;
  align-items: center;
  gap: 11px;
}
.tray-vol {
  margin-left: -4px;
}
.clock {
  width: 80px;
  margin-left: -1px;
  display: flex;
  flex-direction: column;
  align-items: center;
  justify-content: center;
  font-size: 12px;
  line-height: 19px;
}
.notif {
  width: 47px;
  padding-left: 5px;
  display: flex;
  align-items: center;
  position: relative;
}
.notif b {
  position: absolute;
  left: 14px;
  top: 20px;
  width: 16px;
  height: 16px;
  border-radius: 50%;
  background: #333;
  border: 1px solid #aaa;
  font-size: 10px;
  font-weight: 600;
  line-height: 14px;
  text-align: center;
}
```
